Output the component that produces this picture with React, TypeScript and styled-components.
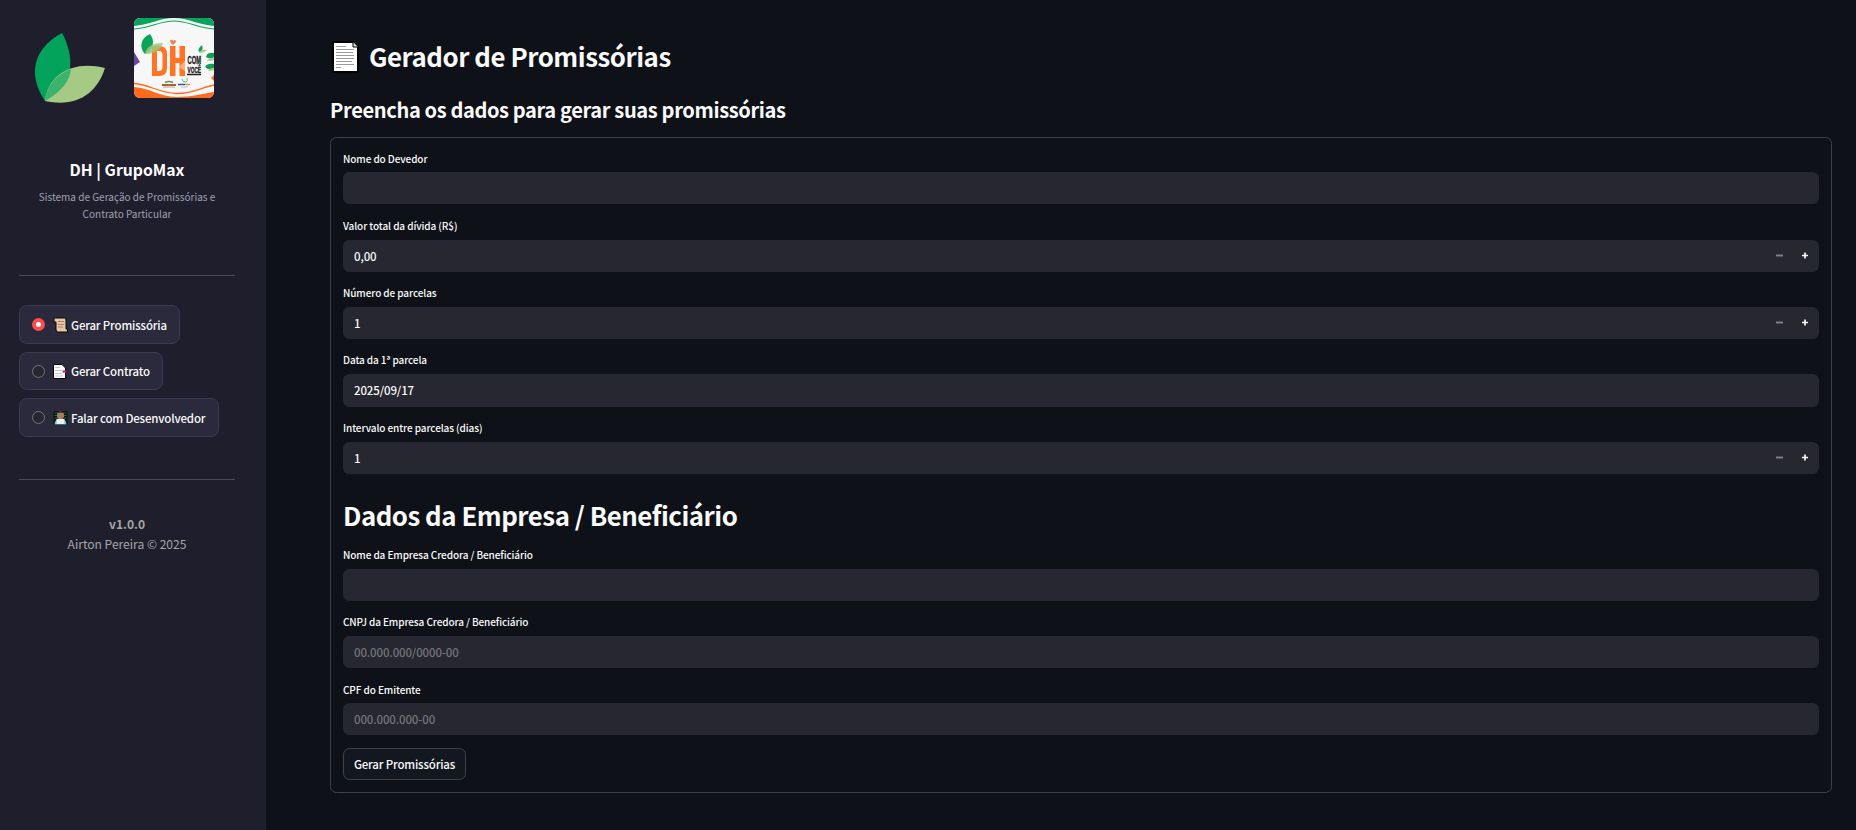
import React from 'react';
import styled, { createGlobalStyle } from 'styled-components';

const Global = createGlobalStyle`
  * { box-sizing: border-box; }
  body { margin: 0; background: #0e1117; color: #fafafa; font-family: "Noto Sans CJK SC", "Noto Sans", sans-serif; }
  h1, h2, h3, p { margin: 0; }
`;
const Page = styled.div`display: flex; height: 830px; overflow: hidden;`;
const Sidebar = styled.aside`width: 266px; flex: none; background: #1f1e2d; padding: 18px 31px 0 19px; display: flex; flex-direction: column;`;
const Logos = styled.div`display: flex; height: 140px; align-items: flex-start;`;
const LeafLogo = styled.svg`width: 80px; height: 80px; margin: 10px 24px 0 11px; flex: none;`;
const CardLogo = styled.svg`width: 80px; height: 80px; border-radius: 6px; flex: none;`;
const Brand = styled.h3`font-size: 15.76px; line-height: 24px; font-weight: 700; text-align: center; color: #fff; white-space: nowrap;`;
const Tagline = styled.p`margin-top: 6px; height: 87px; font-size: 10.03px; line-height: 17px; text-align: center; color: #a0a0b0;`;
const Rule = styled.hr`width: 100%; height: 1px; border: 0; margin: 0; background: #4b4a58; flex: none;`;
const Menu = styled.nav`display: flex; flex-direction: column; align-items: flex-start; gap: 8px; padding: 29px 0 42px;`;
const Option = styled.label<{ $w: number; $h: number }>`
  display: flex; align-items: center; width: ${p => p.$w}px; height: ${p => p.$h}px; padding-left: 12px; flex: none;
  border: 1px solid #3a3a52; border-radius: 8px; background: #2a2a3c; font-size: 11.46px; white-space: nowrap;
  font-weight: 500; letter-spacing: -0.15px;
`;
const Dot = styled.span<{ $on?: boolean }>`
  width: 13px; height: 13px; border-radius: 50%; flex: none; margin-right: 8px;
  border: ${p => (p.$on ? '4px solid #ff4b4b' : '1px solid #73737b')}; background: ${p => (p.$on ? '#fff' : '#262730')};
`;
const Emoji = styled.svg`width: 15px; height: 16px; margin-right: 3px; flex: none;`;
const Footer = styled.footer`margin-top: 34px; text-align: center; color: #a6a6a6; font-size: 12.05px; line-height: 20px;`;
const Main = styled.main`flex: 1; padding: 39px 24px 0 64px;`;
const Title = styled.h1`display: flex; height: 36px; align-items: center; font-size: 25.8px; line-height: 36px; font-weight: 600; letter-spacing: -0.46px; white-space: nowrap;`;
const TitleText = styled.span`padding-bottom: 2px;`;
const PageIcon = styled.svg`width: 28px; height: 32px; margin-right: 9px; margin-left: 2px;`;
const Subtitle = styled.h2`margin-top: 21px; height: 41px; font-size: 20.06px; line-height: 28px; font-weight: 600; letter-spacing: -0.36px; white-space: nowrap;`;
const Form = styled.form`height: 656px; border: 1px solid #3e4044; border-radius: 6.4px; padding: 12px 12px 0;`;
const Field = styled.div<{ $gap?: number }>`margin-bottom: ${p => p.$gap ?? 12}px;`;
const Label = styled.label<{ $tight?: boolean }>`
  display: block; height: ${p => (p.$tight ? 22 : 23)}px; font-size: 10.03px; line-height: 18px; font-weight: 500;
  letter-spacing: -0.1px; white-space: nowrap;
`;
const Box = styled.div<{ $h?: number; $muted?: boolean }>`
  display: flex; align-items: center; height: ${p => p.$h ?? 32}px; padding: 0 0 1px 11px; border-radius: 6.4px; background: #262730;
  font-size: 11.46px; font-weight: 500; letter-spacing: -0.12px; color: ${p => (p.$muted ? '#74757b' : '#fafafa')};
`;
const Steps = styled.svg`margin-left: auto; margin-right: 10px; width: 34px; height: 9px;`;
const Section = styled.h1`margin-top: 23px; height: 49px; font-size: 25.8px; line-height: 36px; font-weight: 600; letter-spacing: -0.47px; white-space: nowrap;`;
const Submit = styled.button`
  width: 123px; height: 32px; border: 1px solid #414349; border-radius: 6.4px; background: #131720; color: #fafafa; padding: 0;
  font: 500 11.46px/28px "Noto Sans CJK SC", sans-serif; letter-spacing: -0.15px; white-space: nowrap;
`;

const Stepper = () => (
  <Steps viewBox="0 0 34 9">
    <path d="M1 4.5h7" stroke="#7e7e88" strokeWidth="2" />
    <path d="M27 4.5h6M30 1.5v6" stroke="#fafafa" strokeWidth="1.7" />
  </Steps>
);

const Leaf = () => (
  <LeafLogo viewBox="0 0 80 80">
    <path d="M32 5C-1 23 0 51 15 73C45 57 45 29 32 5Z" fill="#04a35b" />
    <path d="M75 40C43 32 18 46 15 73C47 80 67 65 75 40Z" fill="#a4ca83" />
    <path d="M41 41C25 47 17 58 15 73C31 64 40 53 41 41Z" fill="#3cb36d" />
  </LeafLogo>
);

const Card = () => (
  <CardLogo viewBox="0 0 80 80">
    <path d="M0 0h80v80H0z" fill="#f7f7f7" />
    <path d="M0 0h80v8C65 7 54 0 40 0S15 7 0 8Z" fill="#08a45c" />
    <path d="M0 11C16 10 26 3 40 3s24 7 40 8" fill="none" stroke="#08a45c" strokeWidth="1.2" />
    <path d="M0 69C16 70 26 79 42 79S66 76 80 74v6H0z" fill="#ff6b1e" />
    <path d="M0 65.500C16 67 26 75 42 75.500S66 70 80 67" fill="none" stroke="#ff6b1e" strokeWidth="1.3" />
    <path d="M0 34l6 10-6 4z" fill="#6a479f" />
    <path d="M16 16C5 21 6 31 11 36C20 31 21 22 16 16Z" fill="#08a45c" />
    <path fillRule="evenodd" d="M18 28h7q8 0 8 8v14q0 8-8 8h-7zm5 5v20h2q3.500 0 3.500-4V37q0-4-3.500-4zM36 28h5.500v12h4V28H51v30h-5.500V45h-4v13H36z" fill="#ff7424" />
    <path d="M29 25C18 25 12 29 11 36C21 36 26 32 29 25Z" fill="#9cc77a" opacity=".85" />
    <path d="M36 22q3-1 3 1q2-2 3 0q0 2-3 4q-3-2-3-5z" fill="#ef8256" />
    <path d="M45 49l6-6v10z" fill="#ffb37c" />
    <text x="53.500" y="45.500" fontSize="11.500" fontWeight="700" fontFamily="Liberation Sans" textLength="13.500" lengthAdjust="spacingAndGlyphs" fill="#222" stroke="#222" strokeWidth=".4">COM</text>
    <text x="53.500" y="55" fontSize="9.800" fontWeight="700" fontFamily="Liberation Sans" textLength="13.500" lengthAdjust="spacingAndGlyphs" fill="#222" stroke="#222" strokeWidth=".4">VOCÊ</text>
    <path d="M53 56.500h14" stroke="#222" strokeWidth="1.3" />
    <path d="M68 27q-5 4-3 7q5-1 3-7M80 35q-7-1-8 4q5 3 8 0M80 46q-7-1-9 3q4 4 9 1" fill="#189b59" />
    <path d="M73 32q-6-1-8 3q5 0 8-3M80 40q-5 0-7 3q5 0 7-1M80 50q-5 0-6 3q4 0 6-1" fill="#a4ca83" />
    <path d="M28 66h14v2H28z" fill="#a76436" />
    <path d="M29 69h12" stroke="#d59a86" strokeWidth="1" />
    <path d="M31 64.500q4-2 8 0" fill="none" stroke="#5a9a4c" strokeWidth="1.500" />
    <path d="M44 66.500h7" stroke="#435197" strokeWidth="1.600" />
    <path d="M51 66.500h5" stroke="#f08a4a" strokeWidth="1.600" />
    <path d="M47 69h7" stroke="#a9b2dc" strokeWidth=".8" />
    <path d="M48 61q1 4 4 3q2-1 1-4" fill="none" stroke="#4bb986" />
    <path d="M80 57l-3 3 3 3z" fill="#ff6b1e" />
  </CardLogo>
);

const Scroll = () => (
  <Emoji viewBox="0 0 15 16">
    <path d="M1 1h10.500q1.500 0 1.500 2v9h1.500v3H4L3 13V5H1z" fill="#e8c3a5" stroke="#080808" strokeWidth="1" />
    <path d="M5 4.500h6M5 7.500h6M5 10h5" stroke="#a98269" />
  </Emoji>
);
const Tabs = () => (
  <Emoji viewBox="0 0 15 16">
    <path d="M.5 1.500H9L12.500 5v10.500H.5z" fill="#fff" stroke="#080808" />
    <path d="M2 4.500h5M2 7.500h7M2 10.500h7M2 13h8" stroke="#c9c9c9" />
    <path d="M9.500 7.500h4v2h-4z" fill="#e3008c" />
  </Emoji>
);
const Coder = () => (
  <Emoji viewBox="0 0 15 16">
    <rect x=".5" y="1" width="14" height="14" rx="1" fill="#07140c" />
    <path d="M1.500 3h12M1.500 5.500h12M1.500 8h12" stroke="#236e38" />
    <path d="M4 4.500q0-3 3.500-3t3.500 3v2q-1 3-3.500 3T4 6.500z" fill="#a77b5b" />
    <path d="M4 4.500q0-3 3.500-3t3.500 3l-1-1.500H5z" fill="#4a3428" />
    <path d="M1.500 14.500q0-4 3-5h6q3 1 3 5z" fill="#69bfe0" />
    <path d="M3.500 9h8v5h-8z" fill="#efeff3" />
  </Emoji>
);

export default function App() {
  return (
    <>
      <Global />
      <Page>
        <Sidebar>
          <Logos><Leaf /><Card /></Logos>
          <Brand>DH | GrupoMax</Brand>
          <Tagline>Sistema de Geração de Promissórias e Contrato Particular</Tagline>
          <Rule />
          <Menu>
            <Option $w={161} $h={39}><Dot $on /><Scroll />Gerar Promissória</Option>
            <Option $w={144} $h={38}><Dot /><Tabs />Gerar Contrato</Option>
            <Option $w={200} $h={39}><Dot /><Coder />Falar com Desenvolvedor</Option>
          </Menu>
          <Rule />
          <Footer><b>v1.0.0</b><br />Airton Pereira © 2025</Footer>
        </Sidebar>
        <Main>
          <Title>
            <PageIcon viewBox="0 0 28 32">
              <path d="M1 1h20l5 5v25H1z" fill="#fff" stroke="#000" strokeWidth="2" />
              <path d="M21 1v5h5" fill="#ddd" stroke="#000" />
              <path d="M4 5.500h10M4 8.500h18M4 11.500h17M4 14.500h18M4 17.500h18M4 20.500h16M4 23.500h18M4 26.500h5" stroke="#9b9b9b" />
            </PageIcon>
            <TitleText>Gerador de Promissórias</TitleText>
          </Title>
          <Subtitle>Preencha os dados para gerar suas promissórias</Subtitle>
          <Form>
            <Field $gap={13}><Label $tight>Nome do Devedor</Label><Box /></Field>
            <Field><Label>Valor total da dívida (R$)</Label><Box>0,00<Stepper /></Box></Field>
            <Field><Label>Número de parcelas</Label><Box>1<Stepper /></Box></Field>
            <Field><Label>Data da 1ª parcela</Label><Box $h={33}>2025/09/17</Box></Field>
            <Field $gap={0}><Label>Intervalo entre parcelas (dias)</Label><Box>1<Stepper /></Box></Field>
            <Section>Dados da Empresa / Beneficiário</Section>
            <Field><Label>Nome da Empresa Credora / Beneficiário</Label><Box /></Field>
            <Field $gap={13}><Label>CNPJ da Empresa Credora / Beneficiário</Label><Box $muted>00.000.000/0000-00</Box></Field>
            <Field $gap={13}><Label $tight>CPF do Emitente</Label><Box $muted>000.000.000-00</Box></Field>
            <Submit type="button">Gerar Promissórias</Submit>
          </Form>
        </Main>
      </Page>
    </>
  );
}
